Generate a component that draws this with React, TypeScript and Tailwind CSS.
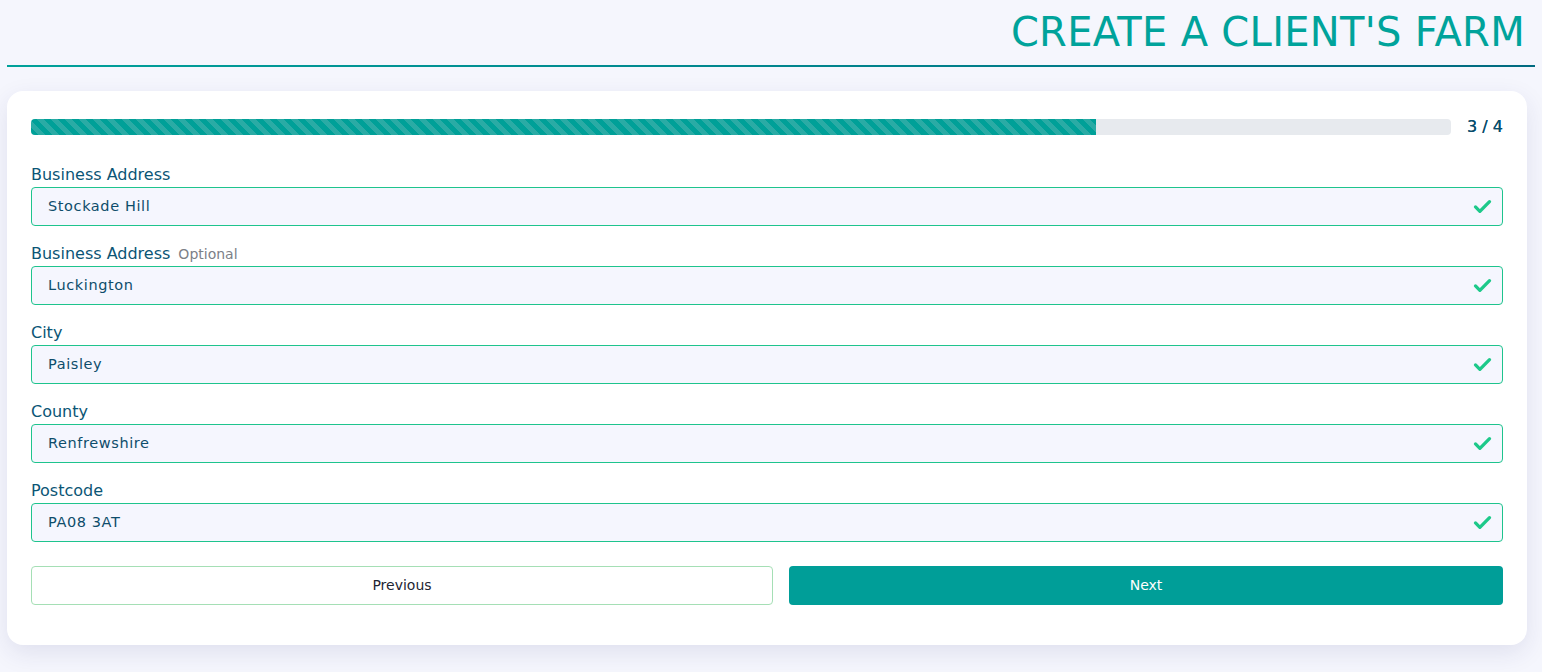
import React from 'react';

const fields = [
  { label: 'Business Address', value: 'Stockade Hill' },
  { label: 'Business Address', value: 'Luckington', optional: true },
  { label: 'City', value: 'Paisley' },
  { label: 'County', value: 'Renfrewshire' },
  { label: 'Postcode', value: 'PA08 3AT' },
];

const Check = () => (
  <svg width="21" height="21" viewBox="0 0 24 24" fill="none" stroke="#1dc98a" strokeWidth="3.8" strokeLinecap="round" strokeLinejoin="round">
    <path d="M4 12.5l5 5L20 6.5" />
  </svg>
);

export default function App() {
  return (
    <div className="min-h-[672px] bg-[#f5f6fd] px-[7px] pt-[8px] font-['DejaVu_Sans',sans-serif]">
      {/* Header */}
      <div className="flex justify-end pr-[10px]">
        <h1 className="text-[40px] leading-[48px] tracking-[0.3px] text-[#00a39b] font-normal">
          CREATE A CLIENT'S FARM
        </h1>
      </div>
      <div className="h-[2px] mt-[9px] bg-gradient-to-r from-[#00a19a] to-[#006a80]" />

      {/* Card */}
      <div className="mt-[24px] mr-[8px] bg-white rounded-[16px] shadow-[0_8px_24px_rgba(40,40,110,0.1)] px-[24px] pt-[24px] pb-[40px]">
        <div className="flex items-center gap-[16px]">
          <div className="flex-1 h-[16px] rounded-[4px] bg-[#e7eaee] overflow-hidden">
            <div className="h-full w-3/4 bg-[repeating-linear-gradient(45deg,#00a098_0px,#00a098_5px,#2aaba5_5px,#2aaba5_10px)]" />
          </div>
          <span className="text-[16px] leading-[24px] text-[#0a4d6c] [text-shadow:0_0_0.4px_#0a4d6c]">3 / 4</span>
        </div>

        <div className="mt-[26px] flex flex-col gap-[18px]">
          {fields.map((f, i) => (
            <div key={i}>
              <div className="flex items-baseline gap-[8px] leading-[20px]">
                <span className="text-[16px] text-[#0b5575]">{f.label}</span>
                {f.optional && <span className="text-[14px] text-[#7c8087]">Optional</span>}
              </div>
              <div className="mt-[2px] h-[39px] flex items-center justify-between rounded-[4px] border border-[#1ec48d] bg-[#f5f6fe] pl-[16px] pr-[9px]">
                <span className="text-[14.5px] tracking-[0.6px] text-[#0e4d6b]">{f.value}</span>
                <Check />
              </div>
            </div>
          ))}
        </div>

        <div className="mt-[24px] flex gap-[16px]">
          <button className="w-[742px] h-[39px] rounded-[4px] border border-[#a5dfb5] bg-white text-[14px] text-[#1d2533]">
            Previous
          </button>
          <button className="flex-1 h-[39px] rounded-[4px] bg-[#009e98] text-[14px] text-white">
            Next
          </button>
        </div>
      </div>
    </div>
  );
}
